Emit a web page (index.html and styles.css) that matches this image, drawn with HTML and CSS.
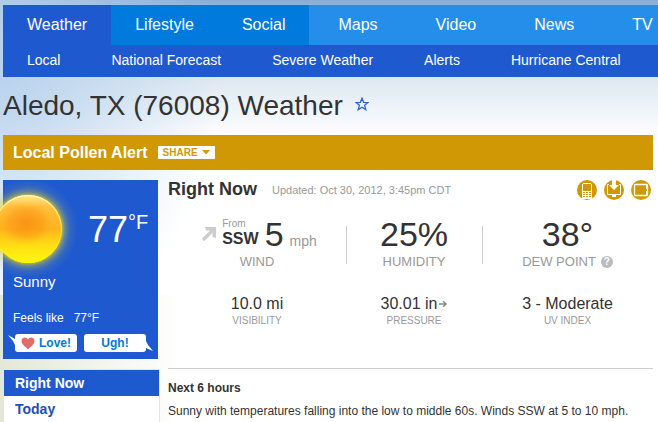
FILE: index.html
```html
<!DOCTYPE html>
<html lang="en">
<head>
  <meta charset="UTF-8">
  <title>Aledo, TX (76008) Weather</title>
  <meta name="viewport" content="width=device-width, initial-scale=1.0">
  <link rel="stylesheet" href="styles.css">
</head>
<body>
  <header class="site-nav">
    <nav class="main-nav">
      <a href="#" class="active">Weather</a>
      <a href="#" class="mid">Lifestyle</a>
      <a href="#" class="mid">Social</a>
      <a href="#" class="wide">Maps</a>
      <a href="#" class="wide">Video</a>
      <a href="#" class="wide">News</a>
      <a href="#" class="wide">TV</a>
    </nav>
    <nav class="sub-nav">
      <a href="#">Local</a>
      <a href="#">National Forecast</a>
      <a href="#">Severe Weather</a>
      <a href="#">Alerts</a>
      <a href="#">Hurricane Central</a>
    </nav>
  </header>

  <main class="page">
    <div class="title">
      <h1>Aledo, TX (76008) Weather</h1>
      <button class="star" aria-label="Save location">
        <svg width="14" height="14" viewBox="0 0 14 14"><path d="M7 1.2 8.6 5.3 13 5.5 9.6 8.2 10.8 12.7 7 10.2 3.2 12.7 4.4 8.2 1 5.5 5.4 5.3Z" fill="none" stroke="#2b66d9" stroke-width="1.3"/></svg>
      </button>
    </div>

    <div class="alert">
      <a href="#">Local Pollen Alert</a>
      <button class="share">SHARE
        <svg width="8" height="5" viewBox="0 0 8 5"><path d="M0 0H8L4 4.5Z" fill="#d19806"/></svg>
      </button>
    </div>

    <div class="columns">
      <aside class="side">
        <section class="card">
          <svg class="sun" width="100" height="100" viewBox="0 0 100 100">
            <defs>
              <radialGradient id="glow">
                <stop offset="0.66" stop-color="#f5e010" stop-opacity="0.8"/>
                <stop offset="0.74" stop-color="#d8cc30" stop-opacity="0.4"/>
                <stop offset="0.84" stop-color="#b0b860" stop-opacity="0.15"/>
                <stop offset="1" stop-color="#90a880" stop-opacity="0"/>
              </radialGradient>
              <linearGradient id="disc" x1="0" y1="0" x2="0" y2="1">
                <stop offset="0" stop-color="#ffe98a"/>
                <stop offset="0.18" stop-color="#ffc040"/>
                <stop offset="0.5" stop-color="#ffb41c"/>
                <stop offset="0.75" stop-color="#ffdf14"/>
                <stop offset="1" stop-color="#fff80a"/>
              </linearGradient>
              <radialGradient id="core">
                <stop offset="0" stop-color="#f98a10" stop-opacity="0.8"/>
                <stop offset="0.6" stop-color="#fb9414" stop-opacity="0.5"/>
                <stop offset="1" stop-color="#ffb01c" stop-opacity="0"/>
              </radialGradient>
              <linearGradient id="rim" x1="0" y1="0" x2="0" y2="1">
                <stop offset="0" stop-color="#fff8c8"/>
                <stop offset="0.5" stop-color="#ffd83a"/>
                <stop offset="1" stop-color="#fff200"/>
              </linearGradient>
            </defs>
            <circle cx="50" cy="50" r="50" fill="url(#glow)"/>
            <circle cx="50" cy="50" r="34" fill="url(#disc)"/>
            <ellipse cx="48" cy="44" rx="29" ry="22" fill="url(#core)"/>
            <circle cx="50" cy="50" r="33.4" fill="none" stroke="url(#rim)" stroke-width="1.2"/>
          </svg>
          <div class="temp">77<span>°F</span></div>
          <p class="sky">Sunny</p>
          <p class="feels"><span>Feels like</span><span>77°F</span></p>
          <div class="votes">
            <button class="love">
              <svg class="tail" width="9" height="10" viewBox="0 0 9 10"><path d="M0 0 7 4H9V10H7L5 6Z" fill="#fff"/></svg>
              <svg width="14" height="13" viewBox="0 0 14 13"><path d="M7 12.5C5 10 .5 7.5 .5 4 .5 2 2 .6 3.8 .6 5.3 .6 6.4 1.4 7 2.6 7.6 1.4 8.7 .6 10.2 .6 12 .6 13.5 2 13.5 4 13.5 7.5 9 10 7 12.5Z" fill="#e06c6c"/></svg>
              Love!
            </button>
            <button class="ugh">
              Ugh!
              <svg class="tail" width="9" height="10" viewBox="0 0 9 10"><path d="M9 10 2 7H0V0H2L4 4Z" fill="#fff"/></svg>
            </button>
          </div>
        </section>
        <nav class="menu">
          <a href="#" class="active">Right Now</a>
          <a href="#">Today</a>
        </nav>
      </aside>

      <section class="now">
        <div class="now-head">
          <h2>Right Now</h2>
          <span class="updated">Updated: Oct 30, 2012, 3:45pm CDT</span>
          <div class="devices">
            <a href="#" aria-label="Mobile">
              <svg width="20" height="20" viewBox="0 0 20 20"><circle cx="10" cy="10" r="10" fill="#d19806"/><path d="M6 3H14V4H15V19H5V4H6Z" fill="#fff"/><path d="M6 4H14V11H6Z" fill="#d19806"/><path d="M6 12H8V13H6ZM9 12H11V13H9ZM12 12H14V13H12ZM6 14H8V15H6ZM9 14H11V15H9ZM12 14H14V15H12ZM6 16H8V17H6ZM9 16H11V17H9ZM12 16H14V17H12Z" fill="#d19806"/></svg>
            </a>
            <a href="#" aria-label="Desktop">
              <svg width="20" height="20" viewBox="0 0 20 20"><circle cx="10" cy="10" r="10" fill="#d19806"/><path d="M5 4.5H3.5V14.5H16.5V4.5H15" fill="none" stroke="#fff"/><path d="M8 0H12V5H15L10 10 5 5H8Z" fill="#fff"/><path d="M8 15H12V17H8Z" fill="#fff"/></svg>
            </a>
            <a href="#" aria-label="Tablet">
              <svg width="20" height="20" viewBox="0 0 20 20"><circle cx="10" cy="10" r="10" fill="#d19806"/><rect x="3.5" y="4.5" width="13" height="11" rx="1" fill="none" stroke="#fff" stroke-width="1.3"/><path d="M15 5H16V9H15ZM15 11H16V15H15Z" fill="#fff"/></svg>
            </a>
          </div>
        </div>

        <div class="stats">
          <div class="stat">
            <div class="big wind">
              <svg width="14" height="14" viewBox="0 0 14 14"><path d="M2 12 10 4" stroke="#ccc" stroke-width="3.4" stroke-linecap="round"/><path d="M3 0H14V11L10.5 10V3.5H4Z" fill="#ccc"/></svg>
              <span class="dir"><small>From</small><b>SSW</b></span>
              <span>5</span>
              <span class="unit">mph</span>
            </div>
            <div class="label">WIND</div>
          </div>
          <div class="stat">
            <div class="big">25%</div>
            <div class="label">HUMIDITY</div>
          </div>
          <div class="stat">
            <div class="big">38°</div>
            <div class="label">DEW POINT <button class="help" aria-label="About dew point">?</button></div>
          </div>
          <div class="detail">
            <div class="value">10.0 mi</div>
            <div class="caption">VISIBILITY</div>
          </div>
          <div class="detail">
            <div class="value">30.01 in<svg width="8" height="8" viewBox="0 0 8 8"><path d="M0 4H7M4.2 1.2 7 4 4.2 6.8" fill="none" stroke="#888" stroke-width="1.4"/></svg></div>
            <div class="caption">PRESSURE</div>
          </div>
          <div class="detail">
            <div class="value">3 - Moderate</div>
            <div class="caption">UV INDEX</div>
          </div>
        </div>

        <div class="next">
          <h3>Next 6 hours</h3>
          <p>Sunny with temperatures falling into the low to middle 60s. Winds SSW at 5 to 10 mph.</p>
        </div>
      </section>
    </div>
  </main>
</body>
</html>
```
FILE: styles.css
```css
* {
  box-sizing: border-box;
}

body {
  margin: 0;
  min-height: 100vh;
  font-family: "Liberation Sans", Arial, sans-serif;
  font-size: 12px;
  color: #333;
  /* sky on top, grass fading in at the lower left */
  background:
    linear-gradient(to right, #e3e8d6, transparent 180px) 0 295px no-repeat,
    radial-gradient(ellipse 220px 300px at 0 60px, #b8d2ed, transparent) no-repeat,
    linear-gradient(to bottom, #8aadd6, #8fb2d8 5px, #dde7f1 77px, #fafcfe 130px, #fff 180px) no-repeat;
  overflow-x: hidden;
}

h1, h2, h3, p {
  margin: 0;
}

a {
  text-decoration: none;
}

button {
  border: 0;
  padding: 0;
  font-family: inherit;
  cursor: pointer;
}

svg {
  display: block;
  flex: none;
}

/* navigation */
.site-nav {
  padding: 5px 0 0 3px;
}

.main-nav, .sub-nav {
  display: flex;
  overflow: hidden;
  white-space: nowrap;
}

.main-nav a, .sub-nav a {
  flex: none;
  color: #fff;
}

.main-nav {
  background: #258eea;
  font-size: 16px;
  line-height: 40px;
}

.main-nav a {
  padding: 0 24px;
}

.main-nav .active {
  background: #1f59d0;
}

.main-nav .mid {
  background: #007adc;
}

.main-nav .wide {
  padding: 0 29px;
}

.sub-nav {
  gap: 51px;
  padding: 0 24px 2px;
  background: #1f59d0;
  font-size: 14px;
  line-height: 30px;
}

/* title and alert */
.page {
  padding: 13px 5px 0 3px;
}

.title {
  display: flex;
  align-items: center;
  gap: 12px;
  margin-bottom: 13px;
}

.title h1 {
  font-size: 28px;
  line-height: 32px;
  font-weight: normal;
}

.star {
  background: none;
  padding-bottom: 4px;
}

.alert {
  display: flex;
  align-items: center;
  gap: 10px;
  height: 35px;
  padding: 0 10px;
  background: #d19806;
}

.alert a {
  color: #fff;
  font-size: 16px;
  font-weight: bold;
}

.share {
  display: flex;
  align-items: center;
  gap: 4px;
  height: 13px;
  padding: 0 5px;
  background: #fff;
  color: #d19806;
  font-size: 10px;
  font-weight: bold;
}

.columns {
  display: grid;
  grid-template-columns: 157px 1fr;
  gap: 8px;
  margin-top: 10px;
}

/* current conditions card */
.card {
  position: relative;
  width: 155px;
  padding: 30px 10px 7px;
  background: #1f59d0;
  color: #fff;
}

.sun {
  position: absolute;
  left: -25px;
  top: -1px;
}

.temp {
  display: flex;
  padding-left: 75px;
  font-size: 36px;
  line-height: 40px;
}

.temp span {
  font-size: 20px;
  line-height: 24px;
}

.sky {
  margin-top: 22px;
  font-size: 15px;
  line-height: 20px;
}

.feels {
  display: flex;
  gap: 10px;
  margin-top: 18px;
  font-size: 12px;
  line-height: 16px;
}

.votes {
  display: flex;
  gap: 7px;
  margin: 8px 2px 0;
}

.votes button {
  position: relative;
  display: flex;
  flex: 1;
  align-items: center;
  justify-content: center;
  gap: 4px;
  height: 18px;
  border-radius: 3px;
  background: #fff;
  color: #007adc;
  font-size: 12px;
  font-weight: bold;
}

.tail {
  position: absolute;
}

.love .tail {
  left: -7px;
  top: 1px;
}

.ugh .tail {
  right: -7px;
  bottom: 1px;
}

.menu {
  margin-top: 10px;
  border: 1px solid #e4e6e4;
  border-bottom: 0;
  background: #fff;
}

.menu a {
  display: block;
  padding: 0 11px;
  color: #1b4fb8;
  font-size: 14px;
  font-weight: bold;
  line-height: 26px;
}

.menu .active {
  background: #1f59d0;
  color: #fff;
}

/* right now */
.now-head {
  display: flex;
  align-items: center;
  height: 20px;
}

.now-head h2 {
  font-size: 18px;
  line-height: 18px;
  padding-bottom: 2px;
}

.updated {
  margin-left: 15px;
  color: #999;
  font-size: 11px;
}

.devices {
  display: flex;
  gap: 7px;
  margin-left: auto;
  padding-right: 2px;
}

.stats {
  display: grid;
  grid-template-columns: 178fr 136fr 171fr;
  row-gap: 24px;
  padding-top: 14px;
  text-align: center;
}

.stat + .stat {
  background: linear-gradient(#ccc, #ccc) 0 12px / 1px 38px no-repeat;
}

.big {
  font-size: 34px;
  line-height: 40px;
}

.wind {
  display: flex;
  align-items: center;
  justify-content: center;
  gap: 6px;
  padding-left: 5px;
}

.dir {
  text-align: left;
}

.dir small, .dir b {
  display: block;
}

.dir small {
  color: #999;
  font-size: 10px;
  line-height: 10px;
}

.dir b {
  font-size: 16px;
  line-height: 20px;
}

.unit {
  color: #999;
  font-size: 14px;
  line-height: 16px;
  padding-top: 14px;
}

.label {
  display: flex;
  align-items: center;
  justify-content: center;
  gap: 5px;
  color: #999;
  font-size: 13px;
  line-height: 16px;
}

.help {
  width: 12px;
  height: 12px;
  border-radius: 50%;
  background: #bbb;
  color: #fff;
  font-size: 10px;
  font-weight: bold;
  line-height: 12px;
}

.value {
  display: flex;
  align-items: center;
  justify-content: center;
  gap: 2px;
  font-size: 16px;
  line-height: 20px;
}

.caption {
  color: #999;
  font-size: 10px;
  line-height: 14px;
}

.next {
  margin-top: 40px;
  padding-top: 11px;
  border-top: 1px solid #ccc;
  line-height: 16px;
}

.next h3 {
  margin-bottom: 7px;
  font-size: 12px;
}
```
